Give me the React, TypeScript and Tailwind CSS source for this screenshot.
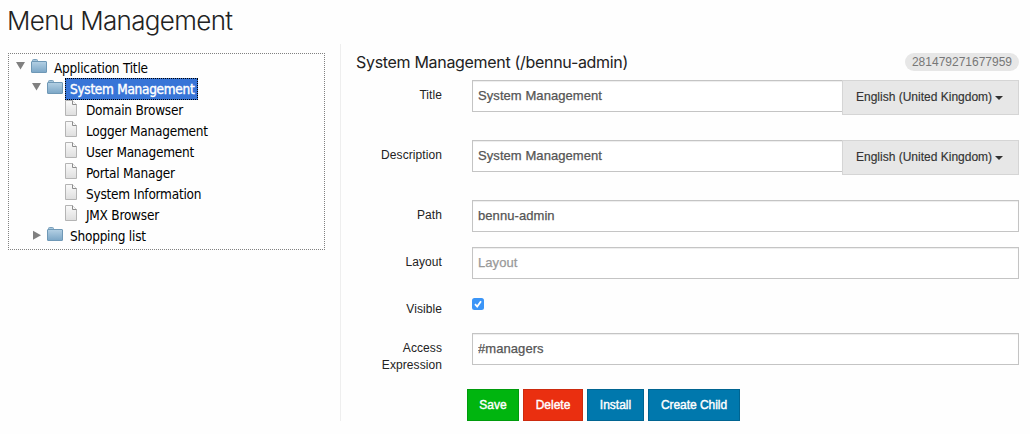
import type { ReactNode } from "react";

function Folder() {
  return (
    <svg width="16" height="14" viewBox="0 0 16 14" className="block shrink-0">
      <defs>
        <linearGradient id="folder" x1="0" y1="0" x2="0" y2="1">
          <stop offset="0" stopColor="#b4d0e4" />
          <stop offset="1" stopColor="#7ba6c6" />
        </linearGradient>
      </defs>
      <path d="M1.5 3V1.5Q1.5 .5 2.5 .5H5.5Q6.5 .5 6.5 1.5V2.5H14.5V4H1.5Z" fill="#a5c6dd" stroke="#7ba0bb" />
      <rect x=".5" y="2.5" width="15" height="11" rx=".5" fill="url(#folder)" stroke="#6f98b6" />
    </svg>
  );
}

function Page() {
  return (
    <svg width="12" height="16" viewBox="0 0 12 16" className="block shrink-0">
      <defs>
        <linearGradient id="page" x1="0" y1="0" x2="0" y2="1">
          <stop offset="0" stopColor="#fafafa" />
          <stop offset="1" stopColor="#dedede" />
        </linearGradient>
      </defs>
      <path d="M.5 .5H7.5L11.5 4.5V15.5H.5Z" fill="url(#page)" stroke="#b4b4b4" />
      <path d="M7.5 .5V4.5H11.5" fill="#f8f8f8" stroke="#8c8c8c" />
    </svg>
  );
}

function Arrow({ open }: { open?: boolean }) {
  return (
    <svg width="10" height="10" viewBox="0 0 10 10" className="block shrink-0">
      <path d={open ? "M0 1H9L4.5 8.5Z" : "M1 .8V9.8L9 5.3Z"} fill="#808080" />
    </svg>
  );
}

function Branch({ label, open, selected, className }: { label: string; open?: boolean; selected?: boolean; className: string }) {
  return (
    <div className={`flex h-[21px] items-center ${className}`}>
      <div className={open ? "-mt-1.5" : "-mt-1"}>
        <Arrow open={open} />
      </div>
      <div className="-mt-[5px] ml-[5px]">
        <Folder />
      </div>
      {selected ? (
        <span className="-mt-px ml-0.5 h-[22px] w-[133px] border border-dotted border-black bg-[#3875d7] pl-1 leading-5 tracking-[-0.28px] whitespace-nowrap text-white [-webkit-text-stroke:0.4px_white]">
          {label}
        </span>
      ) : (
        <span className="ml-[7px]">{label}</span>
      )}
    </div>
  );
}

function Leaf({ label }: { label: string }) {
  return (
    <div className="flex h-[21px] items-center pl-14">
      <div className="-mt-[5px]">
        <Page />
      </div>
      <span className="ml-[9px]">{label}</span>
    </div>
  );
}

function Row({ label, className, children }: { label: string; className: string; children: ReactNode }) {
  return (
    <div className={`flex items-start ${className}`}>
      <label className="mt-[7px] w-[86px] text-right text-[12px] leading-[17px] tracking-[0.08px] text-[#222]">{label}</label>
      <div className="ml-[30px] flex w-[547px]">{children}</div>
    </div>
  );
}

function Input({ value, placeholder }: { value?: string; placeholder?: string }) {
  return (
    <input
      defaultValue={value}
      placeholder={placeholder}
      className="h-8 min-w-0 flex-1 border border-[#c4c4c4] bg-white pr-1.5 pl-[5px] pb-0.5 text-[13px] tracking-[0.07px] text-[#555] outline-none [-webkit-text-stroke:0.25px] [box-shadow:inset_0_1px_1px_rgba(0,0,0,0.075)] placeholder:text-[#999]"
    />
  );
}

function Language() {
  return (
    <button className="-ml-px flex h-[35px] w-[177px] items-center border border-[#d5d5d5] bg-[#e7e7e7] pl-[13px] pb-px text-[12px] whitespace-nowrap text-[#333] [-webkit-text-stroke:0.15px]">
      English (United Kingdom)
      <svg width="8" height="4" viewBox="0 0 8 4" className="mt-0.5 ml-[3px]">
        <path d="M0 0H8L4 4Z" fill="#333" />
      </svg>
    </button>
  );
}

function Button({ label, className }: { label: string; className: string }) {
  return (
    <button className={`h-8 border text-[12px] text-white [-webkit-text-stroke:0.4px_white] ${className}`}>{label}</button>
  );
}

const leaves = ["Domain Browser", "Logger Management", "User Management", "Portal Manager", "System Information", "JMX Browser"];

export default function App() {
  return (
    <div className="h-[434px] w-[1030px] overflow-hidden bg-[#fefefe] font-['Liberation_Sans',Arial,sans-serif]">
      <h1 className="h-11 pt-1 pl-[7px] font-['Inter',sans-serif] text-[26px] leading-[34px] font-[350] tracking-[-0.65px] text-[#222]">
        Menu Management
      </h1>
      <div className="flex">
        <div className="mt-[9px] ml-2 h-[197px] w-[317px] border border-dotted border-[#808080] pt-1 text-[13.5px] leading-[21px] tracking-[-0.23px] text-black font-['DejaVu_Sans_Condensed','DejaVu_Sans',sans-serif]">
          <Branch label="Application Title" open className="pl-[7px]" />
          <Branch label="System Management" open selected className="pl-[23px]" />
          {leaves.map((l) => (
            <Leaf key={l} label={l} />
          ))}
          <Branch label="Shopping list" className="pl-[23px]" />
        </div>
        <div className="ml-[15px] h-[377px] w-[680px] border-l border-[#eee] pl-[15px]">
          <div className="flex h-9 w-[663px] items-start justify-between">
            <h2 className="mt-1.5 font-['Inter',sans-serif] text-[16px] leading-6 font-normal tracking-[-0.31px] text-[#222]">
              System Management (/bennu-admin)
            </h2>
            <span className="mt-[9px] h-[18px] w-[114px] rounded-full bg-[#e7e7e7] text-center text-[12px] leading-[18px] text-[#777]">
              281479271677959
            </span>
          </div>
          <Row label="Title" className="h-[60px]">
            <Input value="System Management" />
            <Language />
          </Row>
          <Row label="Description" className="h-[60px]">
            <Input value="System Management" />
            <Language />
          </Row>
          <Row label="Path" className="h-[47px]">
            <Input value="bennu-admin" />
          </Row>
          <Row label="Layout" className="h-[47px]">
            <Input placeholder="Layout" />
          </Row>
          <Row label="Visible" className="h-[39px]">
            <svg width="12" height="12" viewBox="0 0 12 12" className="mt-1" role="checkbox" aria-checked="true">
              <rect width="12" height="12" rx="2.5" fill="#3b95f7" />
              <path d="M3 6.2L5.2 8.6L9 3.2" fill="none" stroke="white" strokeWidth="1.8" />
            </svg>
          </Row>
          <Row label="Access Expression" className="h-14">
            <Input value="#managers" />
          </Row>
          <div className="ml-[111px] flex gap-1">
            <Button label="Save" className="w-[52px] border-[#009b0c] bg-[#00b50f]" />
            <Button label="Delete" className="w-[60px] border-[#cc2a0e] bg-[#ea2f10]" />
            <Button label="Install" className="w-[57px] border-[#006491] bg-[#0078ad]" />
            <Button label="Create Child" className="w-[92px] border-[#006491] bg-[#0078ad] tracking-[-0.05px]" />
          </div>
        </div>
      </div>
    </div>
  );
}
